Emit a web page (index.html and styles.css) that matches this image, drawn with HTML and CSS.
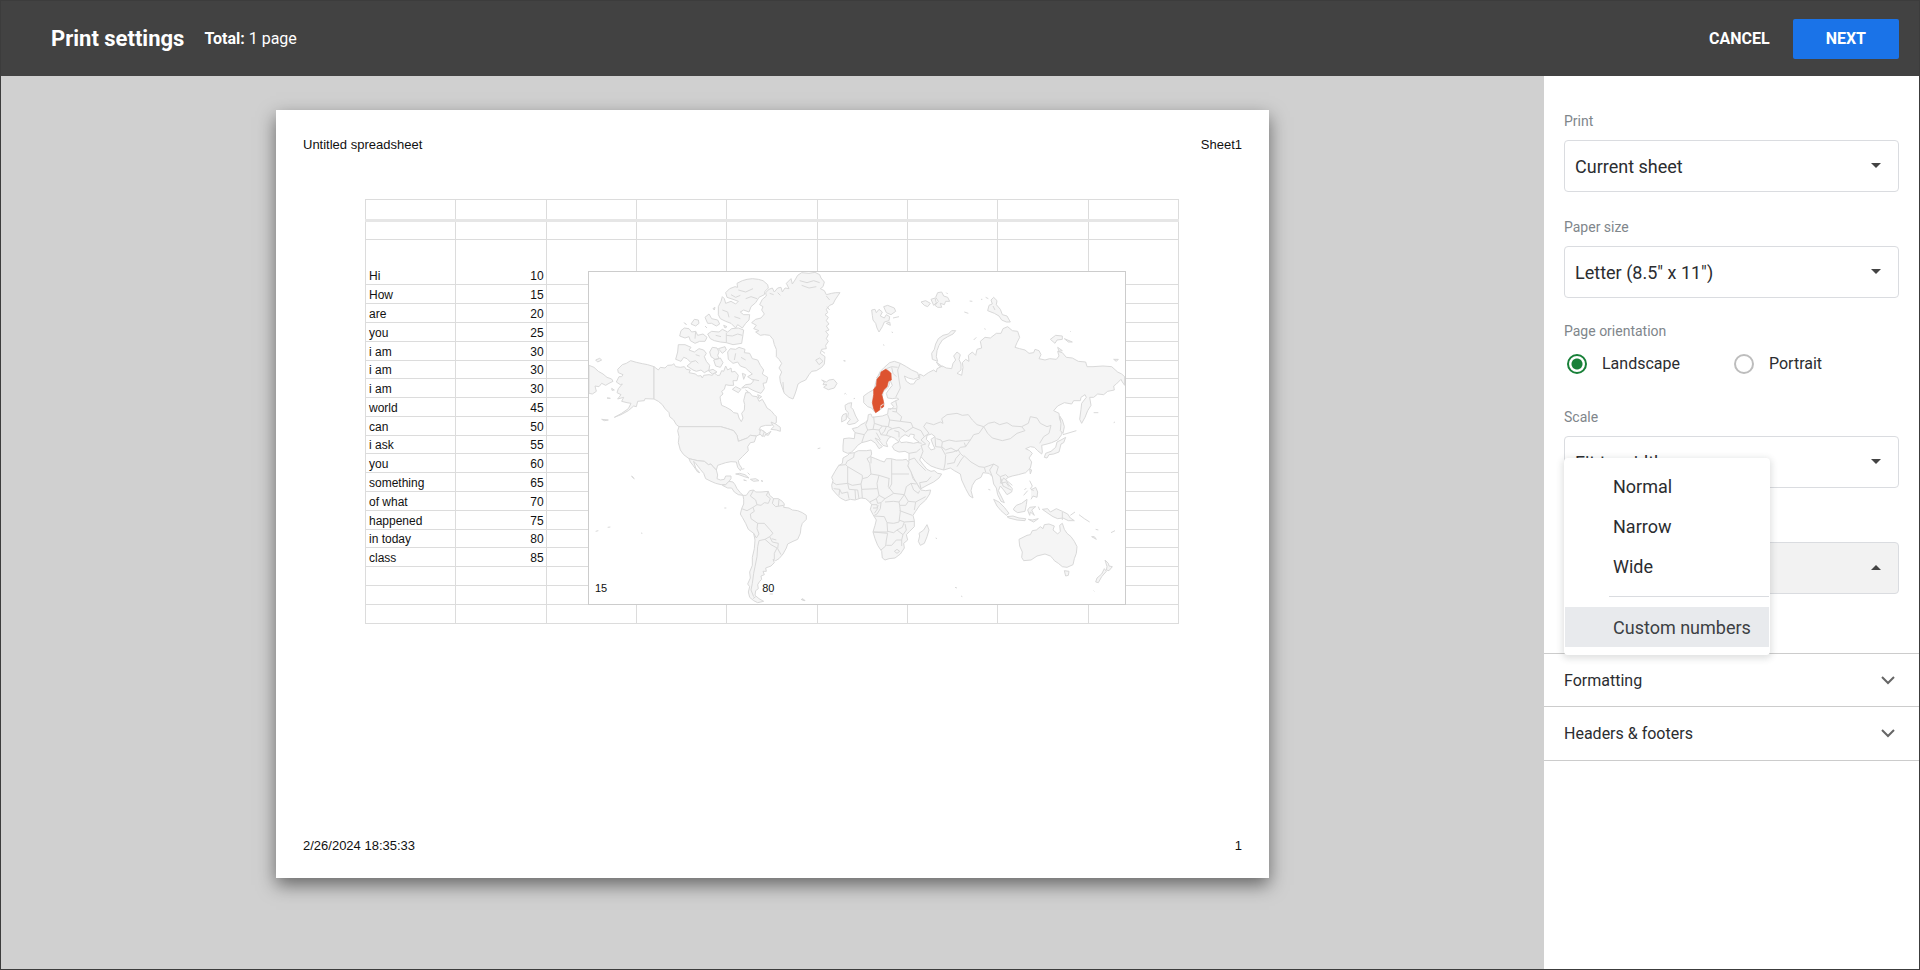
FILE: index.html
```html
<!DOCTYPE html>
<html lang="en">
<head>
<meta charset="utf-8">
<title>Print settings</title>
<link rel="stylesheet" href="styles.css">
</head>
<body>
<div class="app">
  <header class="topbar">
    <h1 class="topbar-title">Print settings</h1>
    <p class="topbar-total"><b>Total:</b> 1 page</p>
    <button class="btn btn-cancel" type="button">CANCEL</button>
    <button class="btn btn-next" type="button">NEXT</button>
  </header>
  <div class="workspace">
    <main class="preview">
      <article class="paper">
        <div class="paper-row"><span>Untitled spreadsheet</span><span>Sheet1</span></div>
        <div class="sheet">
          <table class="cells">
            <tbody>
              <tr class="frozen"><td></td><td></td><td></td><td></td><td></td><td></td><td></td><td></td><td></td></tr>
              <tr><td></td><td></td><td></td><td></td><td></td><td></td><td></td><td></td><td></td></tr>
              <tr class="tall"><td>Hi</td><td>10</td><td></td><td></td><td></td><td></td><td></td><td></td><td></td></tr>
              <tr><td>How</td><td>15</td><td></td><td></td><td></td><td></td><td></td><td></td><td></td></tr>
              <tr><td>are</td><td>20</td><td></td><td></td><td></td><td></td><td></td><td></td><td></td></tr>
              <tr><td>you</td><td>25</td><td></td><td></td><td></td><td></td><td></td><td></td><td></td></tr>
              <tr><td>i am</td><td>30</td><td></td><td></td><td></td><td></td><td></td><td></td><td></td></tr>
              <tr class="short"><td>i am</td><td>30</td><td></td><td></td><td></td><td></td><td></td><td></td><td></td></tr>
              <tr><td>i am</td><td>30</td><td></td><td></td><td></td><td></td><td></td><td></td><td></td></tr>
              <tr><td>world</td><td>45</td><td></td><td></td><td></td><td></td><td></td><td></td><td></td></tr>
              <tr><td>can</td><td>50</td><td></td><td></td><td></td><td></td><td></td><td></td><td></td></tr>
              <tr class="short"><td>i ask</td><td>55</td><td></td><td></td><td></td><td></td><td></td><td></td><td></td></tr>
              <tr><td>you</td><td>60</td><td></td><td></td><td></td><td></td><td></td><td></td><td></td></tr>
              <tr><td>something</td><td>65</td><td></td><td></td><td></td><td></td><td></td><td></td><td></td></tr>
              <tr><td>of what</td><td>70</td><td></td><td></td><td></td><td></td><td></td><td></td><td></td></tr>
              <tr><td>happened</td><td>75</td><td></td><td></td><td></td><td></td><td></td><td></td><td></td></tr>
              <tr class="short"><td>in today</td><td>80</td><td></td><td></td><td></td><td></td><td></td><td></td><td></td></tr>
              <tr><td>class</td><td>85</td><td></td><td></td><td></td><td></td><td></td><td></td><td></td></tr>
              <tr><td></td><td></td><td></td><td></td><td></td><td></td><td></td><td></td><td></td></tr>
              <tr><td></td><td></td><td></td><td></td><td></td><td></td><td></td><td></td><td></td></tr>
              <tr><td></td><td></td><td></td><td></td><td></td><td></td><td></td><td></td><td></td></tr>
            </tbody>
          </table>
          <figure class="geo">
            <svg class="geo-map" viewBox="30 36 1608 996" role="img" aria-label="World map with Sweden highlighted">
              <!-- North America and Greenland -->
              <g class="land">
                <path d="M30 316L45 322 58 334 72 342 84 352 98 357 102 364 90 370 80 376 68 370 60 380 48 378 52 394 40 402 30 400Z"/>
                <path d="M50 300L62 295 68 300 56 306ZM98 385L106 390 99 391ZM84 414L94 415ZM68 478L88 480 76 482Z"/>
                <path d="M225 320L206 314 190 311 172 307 155 302 142 310 130 314 116 328 118 338 132 344 128 350 120 350 112 366 124 374 130 372 118 386 114 398 126 404 116 417 134 412 128 424 144 428 156 430 148 446 128 460 106 472 126 464 148 452 164 438 172 440 176 424 196 422 198 416 225 417Z"/>
                <path d="M225 320L238 330 244 322 258 324 266 316 280 315 284 311 290 320 304 322 316 320 322 328 334 330 330 338 350 342 356 348 366 347 370 354 374 346 390 344 400 346 406 338 414 346 422 346 428 332 434 334 440 318 446 330 456 324 458 336 468 334 478 346 474 362 462 362 464 376 450 376 440 374 436 388 428 394 432 402 423 410 425 424 428 436 440 441 456 450 464 458 476 460 480 474 487 485 492 474 488 460 496 450 497 434 494 422 500 398 512 398 520 408 534 410 540 424 550 418 558 432 564 444 576 452 586 464 592 470 592 488 576 496 560 496 545 500 540 510 552 512 562 520 556 530 545 522 532 528 514 526 505 534 478 544 474 526 464 512 446 506 425 500 300 500 292 494 284 480 272 470 270 458 258 446 250 434 238 424 225 417Z"/>
                <path d="M576 486L590 492 604 502 604 514 592 510 576 508 584 500ZM545 508L556 516 550 530 542 520ZM560 524L576 514 568 526Z"/>
                <path d="M300 500L425 500 446 506 464 512 474 526 478 544 505 534 514 526 532 528 526 546 514 548 506 560 508 572 498 582 490 590 478 602 480 612 488 624 484 632 476 622 472 606 456 605 440 608 428 612 416 616 412 630 402 620 396 612 388 614 376 604 356 602 330 596 314 584 304 570 298 548 300 530 296 512Z"/>
                <path d="M330 596L356 602 376 604 388 614 396 612 402 620 412 630 416 645 414 656 424 660 436 658 440 648 456 648 456 656 450 664 440 674 426 674 410 670 396 664 380 656 374 640 364 628 350 610 344 604 350 624 362 638 356 636 342 616 334 606Z"/>
                <path d="M440 674L450 664 462 666 468 674 474 686 484 698 492 706 478 704 466 696 458 684 446 684 430 676Z"/>
                <path d="M470 642L482 640 498 644 510 654 496 650 480 644ZM514 658L530 656 540 662 524 664ZM494 660L502 662ZM546 662L552 664ZM488 628L496 626M506 638L512 644M158 648L166 656 160 652ZM50 814L58 812M86 802L94 801M186 819L190 820M436 744L442 744"/>
                <!-- Arctic islands -->
                <path d="M440 98L452 86 468 80 476 82 474 70 490 62 504 58 520 56 538 58 552 62 566 74 568 84 558 94 556 104 540 112 530 128 516 140 510 156 494 150 484 156 494 164 512 164 510 180 500 190 490 204 476 194 470 204 456 190 440 184 424 176 418 164 418 140 426 124 430 110 436 116 440 130 456 124 470 132 478 124 462 118 444 112Z"/>
                <path class="lines" d="M456 104L470 112 484 106M478 90L500 96 522 86M500 116L516 110 534 116M430 150L446 156 450 172M466 170L484 176"/>
                <path d="M306 212L316 204 330 206 338 216 350 214 356 226 372 222 384 232 378 244 362 244 348 250 334 242 330 230 318 234 302 228ZM336 192L346 178 358 180 360 190 350 198ZM378 172L390 162 398 176 416 180 422 192 412 198 398 190 386 190ZM386 222L398 214 420 216 430 208 446 216 458 206 478 204 494 210 492 224 488 250 462 254 442 248 424 246 406 242 394 236ZM402 146L408 142 406 150ZM316 188L322 194ZM434 196L444 200 438 204ZM378 198L384 204Z"/>
                <path class="lines" d="M442 226L460 228 476 222 490 226M410 226L426 230M442 248L442 218M350 214L348 236"/>
                <path d="M298 254L318 254 336 262 330 270 346 276 360 266 374 270 382 280 376 290 382 304 392 316 390 330 376 338 366 330 352 334 342 330 324 318 336 308 324 296 314 292 306 304 290 298 296 276ZM392 276L400 262 414 264 420 276 416 286 420 296 408 298 396 290ZM418 266L438 260 442 270 430 280ZM404 300L424 294 432 308 424 322 410 318ZM388 332L402 328 414 336 400 342Z"/>
                <path d="M446 276L454 266 470 268 480 262 498 268 496 278 512 280 520 296 536 300 544 316 554 330 550 342 566 352 562 368 552 370 556 386 546 400 534 396 520 390 506 382 488 384 500 374 516 372 524 362 506 350 520 342 508 332 500 324 484 318 476 306 462 310 448 298Z"/>
                <path class="lines" d="M470 280L466 300M486 292L500 300M520 358L540 362M336 306L350 302 358 310M350 284L362 288"/>
                <path d="M460 388L470 380 486 388 478 398ZM490 340L500 344 494 358ZM536 404L548 410 540 416ZM500 390L508 396Z"/>
                <!-- Greenland -->
                <path d="M656 46L668 38 690 40 708 37 722 44 726 54 736 66 732 80 724 86 736 92 742 104 758 100 770 98 783 98 776 108 768 120 762 132 752 136 742 148 746 158 738 164 748 172 742 182 750 192 742 198 750 210 740 214 748 224 742 236 748 244 740 256 742 266 728 268 724 280 738 290 736 312 728 322 712 332 698 334 690 344 680 360 666 366 657 372 652 390 648 402 642 417 630 412 616 400 610 384 604 366 602 350 608 336 600 324 608 310 600 298 592 290 592 268 586 254 582 238 572 226 556 224 544 226 530 216 540 212 524 206 532 196 518 188 530 178 546 174 556 162 548 150 552 140 542 134 550 118 562 108 560 98 570 88 580 84 586 96 596 84 606 82 610 96 618 84 630 86 622 70 636 56 640 72 648 60Z"/>
                <path class="lines" d="M662 62L684 68 704 62 722 68M668 76L690 84 712 80M710 300L722 294 732 304 720 314ZM742 108L752 120M572 100L584 104M596 98L604 106M744 140L752 150M728 272L738 280M614 396L612 366"/>
                <path d="M728 360L736 366 732 374 744 374 734 382 748 389 766 384 774 370 764 358 750 360 742 366Z"/>
                <path d="M794 302L798 303M800 401L802 403M824 416L828 415"/>
              </g>
              <!-- South America -->
              <g class="land" transform="translate(0 540)">
                <path d="M492 166L502 166 512 152 524 150 530 156 546 156 568 154 572 166 584 176 598 176 610 184 616 192 614 202 630 204 640 210 656 212 670 218 682 226 682 238 670 250 666 262 664 280 656 298 642 304 626 312 622 324 612 342 600 356 590 362 582 358 586 368 576 378 560 384 562 394 552 394 556 404 546 408 548 418 542 424 536 434 538 446 530 452 528 466 540 476 554 484 536 488 524 482 512 472 508 456 512 440 506 432 514 414 512 396 520 376 520 352 526 326 528 300 524 280 508 268 500 250 490 232 484 222 488 206 494 192 494 178Z"/>
                <path class="lines" d="M524 150L514 168 530 180 534 194 522 202 526 214 514 222 516 236 536 250M568 154L562 166 574 176 568 190 556 188 546 196 534 194M584 176L580 190 590 200 614 196M600 178L598 198M488 206L504 212 522 202M536 250L534 266 540 282 532 294 524 280M536 250L556 250 572 268 582 280 572 290 558 298 540 302 536 320 534 350 528 380 524 400 520 430 516 450 524 470M572 290L580 306 598 310 596 326 606 344M558 298L576 314 594 324 586 340 586 358M578 296L592 300"/>
                <path d="M572 462L582 462M668 478L678 482 672 476ZM522 476L530 470M716 26L724 24"/>
              </g>
              <!-- Europe and Asia -->
              <g class="land" transform="translate(660 0)">
                <path d="M286 552L300 546 286 534 276 530 268 536 262 548 266 560 252 556 240 540 228 534 240 550 250 560 240 566 230 550 216 540 204 544 188 548 176 556 168 566 156 578 146 580 132 574 132 558 134 536 150 534 166 536 168 518 160 506 176 502 186 494 198 488 206 480 208 464 216 462 220 472 234 470 250 468 266 462 268 446 276 448 284 440 276 430 290 422 300 418 294 414 280 416 266 414 262 400 270 388 280 376 274 362 268 382 252 396 250 416 256 432 248 446 228 457 218 444 206 440 194 428 194 408 208 398 226 388 230 368 236 350 244 334 256 322 272 308 286 304 304 310 322 320 338 330 356 338 360 352 344 358 328 354 316 348 322 364 334 372 344 372 352 360 362 356 362 342 374 348 388 338 404 330 412 336 414 326 430 318 442 324 458 326 462 310 470 300 464 288 474 276 484 284 480 298 486 312 486 330 474 340 488 346 492 322 490 308 500 298 510 304 508 286 520 276 530 286 534 268 548 264 544 244 558 232 574 234 592 220 606 220 612 206 626 200 640 212 656 214 662 232 654 248 648 262 662 266 678 270 690 280 704 278 708 268 720 272 726 284 720 296 738 300 752 296 772 298 780 288 776 274 790 278 802 292 820 294 838 304 860 306 864 320 882 320 912 318 938 320 956 336 968 342 977 350 977 376 970 366 966 358 952 372 944 378 946 390 926 394 914 404 896 402 884 412 872 412 876 436 866 452 858 472 848 490 842 478 846 448 848 430 862 412 858 404 846 412 844 422 824 422 818 432 796 428 776 438 764 452 780 460 782 478 792 500 788 524 776 540 758 548 744 552 728 556 730 576 728 582 716 572 706 562 694 560 680 566 692 572 700 580 690 594 698 606 694 624 680 638 658 644 640 648 628 652 620 658 628 672 640 686 638 696 624 704 614 690 604 678 598 692 606 708 616 728 606 724 596 704 592 684 584 672 580 650 570 640 552 638 546 652 530 660 520 676 516 692 522 714 512 708 500 686 488 660 484 642 466 632 454 624 434 630 412 624 396 618 380 606 366 590 362 600 374 616 384 628 396 634 406 632 416 640 428 642 420 654 404 666 384 676 366 686 358 678 344 654 334 632 326 616 330 600 330 580 318 574 300 576 286 570 280 560Z"/>
                <path d="M218 150L228 148 232 158 240 148 250 156 244 168 256 174 262 164 272 170 270 182 256 186 250 200 240 216 234 204 230 190 222 180 220 166ZM254 140L266 136 286 144 290 154 276 164 262 158ZM262 190L272 186 274 196ZM282 174L300 170M366 126L380 122 394 130 386 140 376 136ZM396 118L408 114 412 128 404 136ZM416 98L428 96 434 108 446 112 452 124 440 124 436 134 424 130 428 142 416 142 408 136 418 124 410 112ZM442 98L446 102M496 156L508 160M512 123L520 124"/>
                <path d="M576 120L584 112 594 122 592 134 604 148 610 164 624 168 634 186 622 186 608 180 600 168 586 160 566 152 570 136 580 132ZM560 112L568 116M582 138L588 150M556 206L560 208M546 118L550 118"/>
                <path d="M470 212L458 212 448 222 432 226 418 236 410 252 406 268 398 280 400 298 416 304 412 290 414 272 420 256 430 240 446 230 462 222ZM412 306L430 320 420 318Z"/>
                <path d="M754 238L770 226 790 228 790 238 774 240 768 250ZM796 236L820 246 808 246ZM776 262L790 272 780 274ZM814 214L816 216M944 298L958 298 952 304ZM524 240L532 232M884 458L898 458M944 488L948 486"/>
                <path d="M138 436L148 430 158 428 156 442 162 448 170 468 178 482 168 490 150 494 144 490 154 478 146 472 148 458 140 450ZM132 464L142 460 142 478 128 486 128 472ZM136 402L140 400M252 254L256 256M134 302L140 303M278 216L282 218"/>
                <path d="M782 468L790 480 796 500 792 520 784 512 786 490ZM774 546L786 540 800 532 794 548 786 552 780 576 764 582 750 584 744 594 736 592 740 580 756 574 770 562ZM792 524L832 512M692 626L698 630 694 642ZM676 690L682 684"/>
                <!-- Country borders -->
                <path class="lines" d="M304 310L296 330 300 360 304 384 290 412M232 354L244 340 262 326 278 320 296 322M278 322L282 340 292 350M290 422L294 440 292 456 280 454M268 446L292 446M292 456L308 470 304 484 336 488 342 502 320 516 312 510M266 464L272 480 268 500 250 498 226 490 224 470M272 480L304 484M206 480L200 494 206 510 222 508 226 490M168 518L196 524 188 548M206 510L196 524M222 508L240 510 250 498M268 500L280 506 300 502 316 512M240 510L246 524 262 526 276 530M262 526L268 512 280 506M262 500L256 514 246 524M286 512L300 516 300 532M232 518L244 540M342 502L366 512 376 530 366 540"/>
                <path class="lines" d="M376 530L390 520 374 500 382 488 404 494 424 486 432 490 428 476 444 464 474 460 490 466 508 464 520 480 534 494 554 500 540 520 524 524 514 540 494 542 470 544 450 540 430 546 426 540 412 536M554 500L568 490 586 486 602 494 624 488 640 498 668 500 688 490 694 470 714 474 724 490 744 500 756 496 750 520 734 530 722 550M554 500L566 520 580 534 610 542 634 536 654 520 678 512 668 500M430 546L428 560 440 570 456 564 474 574 484 562 500 560 496 548M408 530L410 560 430 562M366 540L380 552 366 556 372 574 366 590M428 564L440 586 438 612 434 630M440 580L462 576 478 570 484 580 470 596 466 608 444 612M484 580L494 590 486 600 474 620M494 586L516 606 540 620 556 622 568 618 584 612 598 620 592 640 604 650 620 644 628 652M556 622L560 636M584 612L572 630 580 650M604 650L606 670 620 666 630 680M330 580L352 576 364 566M330 600L346 594 358 610 380 632M366 686L362 668 384 664 396 650M326 548L350 546 368 550M514 540L500 560"/>
                <path class="sea" d="M306 532L318 524 330 530 334 522 346 524 344 534 360 546 344 550 322 546 306 548 300 540Z"/>
                <path class="sea" d="M384 526L398 522 408 530 396 538 402 554 408 566 396 570 388 560 392 548 382 538Z"/>
              </g>
              <!-- Sweden -->
              <path class="highlight" d="M920 328L928 332 936 340 937 360 928 364 924 380 914 390 908 404 912 418 914 430 904 436 902 450 890 458 884 446 880 428 884 404 884 388 892 378 894 358 904 346 906 336ZM906 440L914 434 914 440 908 444Z"/>
              <!-- Africa, southern Asia and Oceania -->
              <g class="land" transform="translate(660 540)">
                <path d="M152 40L166 38 178 32 202 32 216 30 218 42 214 50 230 56 244 62 256 66 262 56 276 56 292 60 310 60 322 58 330 68 326 78 336 96 342 116 352 128 360 142 366 150 380 152 395 150 392 162 380 180 362 196 350 214 342 226 346 242 346 260 332 274 322 284 326 300 314 310 316 324 304 342 288 354 270 356 258 360 250 354 248 334 236 316 228 296 222 276 228 256 232 240 222 224 214 208 218 194 212 186 200 176 186 174 168 180 154 178 140 182 124 174 112 162 100 148 98 136 102 122 98 112 108 94 118 78 130 70 132 54 146 46Z"/>
                <path class="lines" d="M166 38L164 52 144 64 140 74 118 76M140 74L146 80 146 130 112 134 100 126M146 80L190 106 190 116 206 112 216 102 212 70 204 56 214 50M216 50L216 70M278 58L278 132 270 146M278 102L330 102M216 102L240 106 272 116M240 106L234 130 236 146 188 148 186 132 190 116M146 130L160 136 186 132M146 130L150 148 176 150M104 146L122 148 128 160 146 156 150 176M122 148L120 166M168 150L170 178M176 150L180 176M188 148L190 174M236 146L240 166 232 176 212 186M240 166L258 176 284 160 316 164M270 116L268 140 276 150 284 160M316 164L328 184 350 186 380 170M316 164L322 140 336 130 352 132M336 130L344 150 358 160 362 152M328 184L320 196 302 196 300 186 316 164M350 186L346 210M232 176L236 190 246 188 258 176M218 194L234 194 236 206 226 220M246 188L244 206 234 222 226 226M226 228L256 230 264 248 266 276 222 276M264 248L284 250 300 246 304 214 302 196M302 212L340 226M300 186L284 184 258 186M300 240L316 246 346 244M316 246L310 262 294 270 284 278 266 274M222 276L266 280 262 300 260 318 246 330M262 316L278 316 292 300 308 300 312 284 294 270M308 300L308 318M312 284L322 270 318 252M286 334L294 328 302 334 294 340ZM222 204L234 204 238 196"/>
                <path d="M384 254L390 270 384 290 376 310 364 316 358 304 362 288 360 280 374 270ZM410 294L414 296M568 148L574 150M468 442L474 444M486 468L490 470M6 478L16 482"/>
                <path d="M584 178L600 186 616 202 630 220 622 226 606 212 594 198ZM624 230L642 228 660 234 680 236 678 242 654 240 630 234ZM644 206L652 196 668 190 684 178 682 194 678 214 656 218 644 210ZM686 210L692 202 710 200 698 210 706 226 694 216 692 226ZM688 238L700 240 718 236 704 246ZM692 122L700 138 694 146 704 152M696 150L710 142 716 156 714 172 702 168 696 178M674 166L686 152M730 208L746 206 754 216 772 206 790 214 806 222 814 234 826 242 808 242 792 234 776 236 762 230 750 222ZM814 226L828 216M840 224L856 236 872 246M718 200L722 210M878 290L892 298 886 290ZM890 268L898 270M936 278L948 272"/>
                <path class="lines" d="M604 130L614 114 626 124 640 136M606 116L612 138 636 150M790 216L790 240"/>
                <path d="M660 298L672 292 684 286 694 284 700 272 712 270 724 260 732 266 736 254 750 252 766 258 762 270 776 282 784 274 782 256 790 250 796 268 804 280 816 290 826 304 834 320 832 340 826 356 822 374 804 382 790 380 778 370 766 362 762 356 754 348 738 342 714 348 696 360 674 362 668 352 670 336 662 318Z"/>
                <path d="M796 392L810 394 808 406 800 408ZM918 360L928 370 930 378 940 380 930 392 922 390 924 380ZM916 386L922 394 908 410 898 428 890 426 894 414 908 402ZM884 452L886 454"/>
              </g>
            </svg>
            <figcaption class="geo-legend"><span>15</span><span>80</span></figcaption>
          </figure>
        </div>
        <div class="paper-row paper-foot"><span>2/26/2024 18:35:33</span><span>1</span></div>
      </article>
    </main>
    <aside class="settings">
      <form class="fields">
        <div class="field">
          <label for="print">Print</label>
          <div class="select">
            <select id="print"><option>Current sheet</option></select>
            <svg class="caret" viewBox="0 0 10 5"><path d="M0 0h10L5 5z"/></svg>
          </div>
        </div>
        <div class="field">
          <label for="paper">Paper size</label>
          <div class="select">
            <select id="paper"><option>Letter (8.5" x 11")</option></select>
            <svg class="caret" viewBox="0 0 10 5"><path d="M0 0h10L5 5z"/></svg>
          </div>
        </div>
        <fieldset class="orientation">
          <legend>Page orientation</legend>
          <div class="radios">
            <label class="radio"><input type="radio" name="orientation" checked>Landscape</label>
            <label class="radio"><input type="radio" name="orientation">Portrait</label>
          </div>
        </fieldset>
        <div class="field">
          <label for="scale">Scale</label>
          <div class="select">
            <select id="scale"><option>Fit to width</option></select>
            <svg class="caret" viewBox="0 0 10 5"><path d="M0 0h10L5 5z"/></svg>
          </div>
        </div>
        <div class="field field-open">
          <label for="margins">Margins</label>
          <div class="select">
            <select id="margins"><option>Normal</option></select>
            <svg class="caret" viewBox="0 0 10 5"><path d="M0 5h10L5 0z"/></svg>
          </div>
          <div class="menu" role="listbox" aria-label="Margins">
            <button class="menu-item" type="button" role="option">Normal</button>
            <button class="menu-item" type="button" role="option">Narrow</button>
            <button class="menu-item" type="button" role="option">Wide</button>
            <hr class="menu-line">
            <button class="menu-item menu-item-active" type="button" role="option">Custom numbers</button>
          </div>
        </div>
      </form>
      <button class="section" type="button">Formatting
        <svg class="chevron" viewBox="0 0 14 9"><path d="M1 1l6 6 6-6"/></svg></button>
      <button class="section" type="button">Headers &amp; footers
        <svg class="chevron" viewBox="0 0 14 9"><path d="M1 1l6 6 6-6"/></svg></button>
    </aside>
  </div>
</div>
</body>
</html>
```
FILE: styles.css
```css
* { box-sizing: border-box; }

body {
  margin: 0;
  font-family: Roboto, "Liberation Sans", sans-serif;
  font-size: 16px;
  color: #2b2d30;
}

button, select { font: inherit; color: inherit; }

.app {
  display: flex;
  flex-direction: column;
  min-height: 100vh;
  border: 1px solid #3c3c3c;
}

.topbar {
  display: flex;
  align-items: center;
  height: 75px;
  padding: 0 20px 0 50px;
  background: #424242;
  color: #fff;
}

.topbar-title { margin: 0 20px 0 0; font-size: 22px; font-weight: 700; }
.topbar-total { margin: 0 auto 0 0; }
.topbar-total b { font-weight: 700; }

.btn {
  height: 40px;
  border: 0;
  border-radius: 2px;
  background: none;
  font-weight: 700;
  color: #fff;
}
.btn-cancel { padding: 0 23px; }
.btn-next { padding: 0 33px; background: #1a73e8; }

.workspace { display: flex; flex: 1; }

.preview {
  flex: 1;
  display: flex;
  justify-content: center;
  align-items: flex-start;
  padding: 34px 20px;
  background: #d0d0d0;
}

.paper {
  display: flex;
  flex-direction: column;
  width: 993px;
  min-height: 768px;
  padding: 26px 27px 23px;
  background: #fff;
  box-shadow: 0 7px 17px rgba(0, 0, 0, .5);
  font-family: "Liberation Sans", Arial, sans-serif;
  font-size: 13px;
  line-height: 18px;
  color: #111;
}

.paper-row { display: flex; justify-content: space-between; }
.paper-foot { margin-top: auto; }

.sheet {
  position: relative;
  margin: 45px 63px 0 62px;
}

.cells {
  width: 100%;
  table-layout: fixed;
  border-collapse: collapse;
  font-size: 12px;
  line-height: 16px;
}
.cells td {
  height: 19px;
  padding: 0 2px 0 3px;
  border: 1px solid #dcdcdc;
  vertical-align: bottom;
}
.cells td:nth-child(2) { text-align: right; }
.cells .frozen td { height: 21px; border-bottom: 3px solid #e6e6e6; }
.cells .tall td { height: 45px; }
.cells .short td { height: 18px; }

.geo {
  position: absolute;
  top: 72px;
  left: 223px;
  width: 538px;
  margin: 0;
  border: 1px solid #ccc;
  background: #fff;
}
.geo-map { display: block; width: 100%; }
.land path { fill: #f5f5f5; stroke: #d9d9d9; stroke-width: 3; stroke-linejoin: round; }
.land .lines { fill: none; }
.land .sea { fill: #fff; }
.highlight { fill: #dd5330; stroke: #dd5330; stroke-width: 2; }

.geo-legend {
  position: absolute;
  bottom: 8px;
  left: 6px;
  display: flex;
  gap: 155px;
  font-size: 11px;
  line-height: 16px;
}

.settings { width: 375px; background: #fff; }

.fields {
  display: flex;
  flex-direction: column;
  padding: 35px 20px 59px;
}

.field { margin-bottom: 25px; }
.field > label, legend {
  display: block;
  padding: 0;
  font-size: 14px;
  line-height: 20px;
  color: #80868b;
}
.field > label { margin-bottom: 9px; }

.select { position: relative; }
.select select {
  display: block;
  width: 100%;
  height: 52px;
  padding: 0 40px 0 10px;
  border: 1px solid #dadce0;
  border-radius: 4px;
  appearance: none;
  background: #fff;
  font-size: 18px;
}
.caret {
  position: absolute;
  top: 23px;
  right: 18px;
  width: 10px;
  height: 5px;
  fill: #444;
}

.orientation { margin: 0 0 31px; padding: 0; border: 0; }
.orientation legend { line-height: 16px; }
.radios {
  display: grid;
  grid-template-columns: 167px 1fr;
  margin-top: 13px;
}
.radio { display: flex; align-items: center; gap: 15px; line-height: 24px; }
.radio input {
  width: 20px;
  height: 20px;
  margin: 0 0 0 3px;
  border: 2px solid #bdbdbd;
  border-radius: 50%;
  appearance: none;
}
.radio input:checked {
  border-color: #188038;
  background: radial-gradient(circle, #188038 5px, #fff 6px);
}

.field-open { position: relative; margin: 0; }
.field-open select { background: #f2f2f2; }

.menu {
  position: absolute;
  bottom: -61px;
  left: 0;
  width: 206px;
  padding: 8px 1px;
  border-radius: 4px;
  background: #fff;
  box-shadow: 0 2px 6px 2px rgba(60, 64, 67, .15);
}
.menu-item {
  display: block;
  width: 100%;
  height: 40px;
  padding: 0 0 0 48px;
  border: 0;
  background: none;
  font-size: 18px;
  text-align: left;
}
.menu-item-active { background: #e8eaed; color: #3c4043; }
.menu-line { margin: 10px 0 10px 44px; border: 0; border-top: 1px solid #dadce0; }

.section {
  display: flex;
  justify-content: space-between;
  align-items: center;
  width: 100%;
  height: 53px;
  padding: 0 24px 0 20px;
  border: 0;
  border-top: 1px solid #ccc;
  background: none;
}
.section:last-child { height: 55px; border-bottom: 1px solid #ccc; }
.chevron { width: 14px; height: 9px; fill: none; stroke: #666; stroke-width: 2; }
```
